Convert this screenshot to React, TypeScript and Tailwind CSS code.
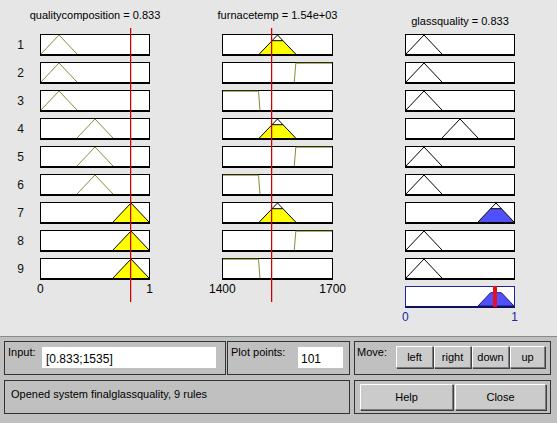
import React from "react";

type Shape =
  | { type: "tri"; p: [number, number, number] }
  | { type: "line"; pts: string };

const A: Shape = { type: "tri", p: [0, 16.67, 33.33] };
const B: Shape = { type: "tri", p: [33.33, 50, 66.67] };
const C: Shape = { type: "tri", p: [66.67, 83.33, 100] };
const HIGH: Shape = { type: "line", pts: "65.4,100 66.8,1 100,1" };
const LOW: Shape = { type: "line", pts: "0,1 32.6,1 33.9,100" };

const IN_LINE = "#8a8a36";
const YELLOW = "#ffff00";
const BLUE = "#5050ff";

const col1 = [A, A, A, B, B, B, C, C, C];
const lvl1 = [0, 0, 0, 0, 0, 0, 1, 1, 1];
const col2 = [B, HIGH, LOW, B, HIGH, LOW, B, HIGH, LOW];
const lvl2 = [0.7, 0, 0, 0.7, 0, 0, 0.7, 0, 0];
const col3 = [A, A, A, B, A, A, C, A, A];
const lvl3 = [0, 0, 0, 0, 0, 0, 0.7, 0, 0];

function MfShape({ shape, level, line, fill }: { shape: Shape; level: number; line: string; fill: string }) {
  if (shape.type === "line") {
    return <polyline points={shape.pts} fill="none" stroke={line} strokeWidth={1} vectorEffect="non-scaling-stroke" />;
  }
  const [a, b, c] = shape.p;
  const outline = `${a},100 ${b},0 ${c},100`;
  if (level <= 0) {
    return <polyline points={outline} fill="none" stroke={line} strokeWidth={1} vectorEffect="non-scaling-stroke" />;
  }
  const y = 100 - 100 * level;
  const l = a + (b - a) * level;
  const r = c - (c - b) * level;
  return (
    <>
      <polygon points={`${a},100 ${l},${y} ${r},${y} ${c},100`} fill={fill} />
      <polyline points={outline} fill="none" stroke="#000" strokeWidth={1} vectorEffect="non-scaling-stroke" />
      {level < 1 && (
        <line x1={l} y1={y} x2={r} y2={y} stroke="#000" strokeWidth={1} vectorEffect="non-scaling-stroke" />
      )}
    </>
  );
}

function MfBox({ shape, level, line, fill }: { shape: Shape; level: number; line: string; fill: string }) {
  return (
    <div className="h-[22px] border border-b-2 border-black bg-white">
      <svg viewBox="0 0 100 100" preserveAspectRatio="none" className="block h-full w-full overflow-visible">
        <MfShape shape={shape} level={level} line={line} fill={fill} />
      </svg>
    </div>
  );
}

function InputColumn({
  title,
  shapes,
  levels,
  lo,
  hi,
  width,
  labelPad,
}: {
  title: string;
  shapes: Shape[];
  levels: number[];
  lo: string;
  hi: string;
  width: string;
  labelPad: string;
}) {
  return (
    <div className={`flex shrink-0 flex-col ${width}`}>
      <div className="h-[34px] pt-[8px] text-center leading-[14px] whitespace-nowrap -mx-[20px]">{title}</div>
      <div className="flex flex-col gap-[6px]">
        {shapes.map((s, i) => (
          <MfBox key={i} shape={s} level={levels[i]} line={IN_LINE} fill={YELLOW} />
        ))}
      </div>
      <div className={`mt-[2px] flex h-[14px] justify-between leading-[14px] text-[12px] ${labelPad}`}>
        <span>{lo}</span>
        <span>{hi}</span>
      </div>
    </div>
  );
}

function Button({ label, className }: { label: string; className: string }) {
  return (
    <div
      className={`flex items-center justify-center border border-t-white border-l-white border-r-[#7a7a7a] border-b-[#7a7a7a] bg-[#cbcbcb] shadow-[1px_1px_0_#404040] ${className}`}
    >
      {label}
    </div>
  );
}

export default function App() {
  return (
    <div className="flex h-[423px] w-[557px] flex-col overflow-hidden bg-[#e6e6e6] font-['Liberation_Sans',Arial,sans-serif] text-[11px] text-black">
      {/* plot area */}
      <div className="relative flex h-[336px] shrink-0">
        <div className="flex w-[40px] shrink-0 flex-col">
          <div className="h-[34px]" />
          <div className="flex flex-col gap-[6px]">
            {col1.map((_, i) => (
              <div key={i} className="flex h-[22px] items-center justify-center pl-[1px] text-[12px] text-[#111]">
                {i + 1}
              </div>
            ))}
          </div>
        </div>

        <InputColumn
          title="qualitycomposition = 0.833"
          shapes={col1}
          levels={lvl1}
          lo="0"
          hi="1"
          width="w-[110px]"
          labelPad="-mx-[3px]"
        />
        <div className="w-[72px] shrink-0" />
        <InputColumn
          title="furnacetemp = 1.54e+03"
          shapes={col2}
          levels={lvl2}
          lo="1400"
          hi="1700"
          width="w-[111px]"
          labelPad="-mx-[13px]"
        />
        <div className="w-[72px] shrink-0" />

        <div className="flex w-[110px] shrink-0 flex-col">
          <div className="h-[34px] pt-[14px] text-center leading-[14px] whitespace-nowrap -mx-[20px]">
            glassquality = 0.833
          </div>
          <div className="flex flex-col gap-[6px]">
            {col3.map((s, i) => (
              <MfBox key={i} shape={s} level={lvl3[i]} line="#000" fill={BLUE} />
            ))}
            <div className="relative h-[22px] border border-b-2 border-[#23239a] border-b-[#101060] bg-white">
              <svg viewBox="0 0 100 100" preserveAspectRatio="none" className="block h-full w-full">
                <polygon
                  points="66.67,100 78.33,30 88.33,30 100,100"
                  fill={BLUE}
                  stroke="#1a1a70"
                  strokeWidth={1}
                  vectorEffect="non-scaling-stroke"
                />
              </svg>
              <div className="absolute left-[87px] top-[-1px] h-[21px] w-[4px] bg-[#e8101c]" />
            </div>
          </div>
          <div className="mt-[2px] flex h-[14px] justify-between leading-[14px] text-[12px] text-[#2424a8] -mx-[3px]">
            <span>0</span>
            <span>1</span>
          </div>
        </div>

        {/* input value lines */}
        <div className="absolute left-[130px] top-[28px] h-[274px] w-[1px] bg-[#d00000] shadow-[0.5px_0_0_rgba(208,0,0,0.5)]" />
        <div className="absolute left-[271px] top-[28px] h-[274px] w-[1px] bg-[#d00000] shadow-[0.5px_0_0_rgba(208,0,0,0.5)]" />
      </div>

      {/* control panel */}
      <div className="flex flex-1 flex-col gap-[5px] border-t border-t-[#8a8a8a] bg-[#c0c0c0] pl-[4px] pt-[4px]">
        <div className="flex h-[34px]">
          <div className="flex w-[222px] items-start border border-[#333] pl-[3px] pt-[3px]">
            <span className="w-[34px] leading-[14px]">Input:</span>
            <div className="mt-[2px] flex h-[21px] w-[174px] items-center bg-white pl-[4px] pt-[2px] text-[12px]">
              [0.833;1535]
            </div>
          </div>
          <div className="ml-[1px] flex w-[123px] items-start border border-[#333] pl-[3px] pt-[3px]">
            <span className="w-[67px] leading-[14px]">Plot points:</span>
            <div className="mt-[2px] flex h-[21px] w-[45px] items-center bg-white pl-[3px] pt-[2px] text-[12px]">
              101
            </div>
          </div>
          <div className="ml-[4px] flex w-[197px] items-start border border-[#333] pl-[2px] pt-[3px]">
            <span className="w-[39px] leading-[14px]">Move:</span>
            <div className="mt-[1px] flex gap-[1px]">
              <Button label="left" className="h-[22px] w-[37px]" />
              <Button label="right" className="h-[22px] w-[37px]" />
              <Button label="down" className="h-[22px] w-[37px]" />
              <Button label="up" className="h-[22px] w-[35px]" />
            </div>
          </div>
        </div>
        <div className="flex h-[34px]">
          <div className="flex w-[346px] items-start border border-[#333] pl-[6px] pt-[6px]">
            <span className="leading-[14px]">Opened system finalglassquality, 9 rules</span>
          </div>
          <div className="ml-[4px] flex w-[197px] items-start gap-[2px] border border-[#333] pl-[5px] pt-[3px]">
            <Button label="Help" className="h-[26px] w-[93px]" />
            <Button label="Close" className="h-[26px] w-[91px]" />
          </div>
        </div>
      </div>
    </div>
  );
}
